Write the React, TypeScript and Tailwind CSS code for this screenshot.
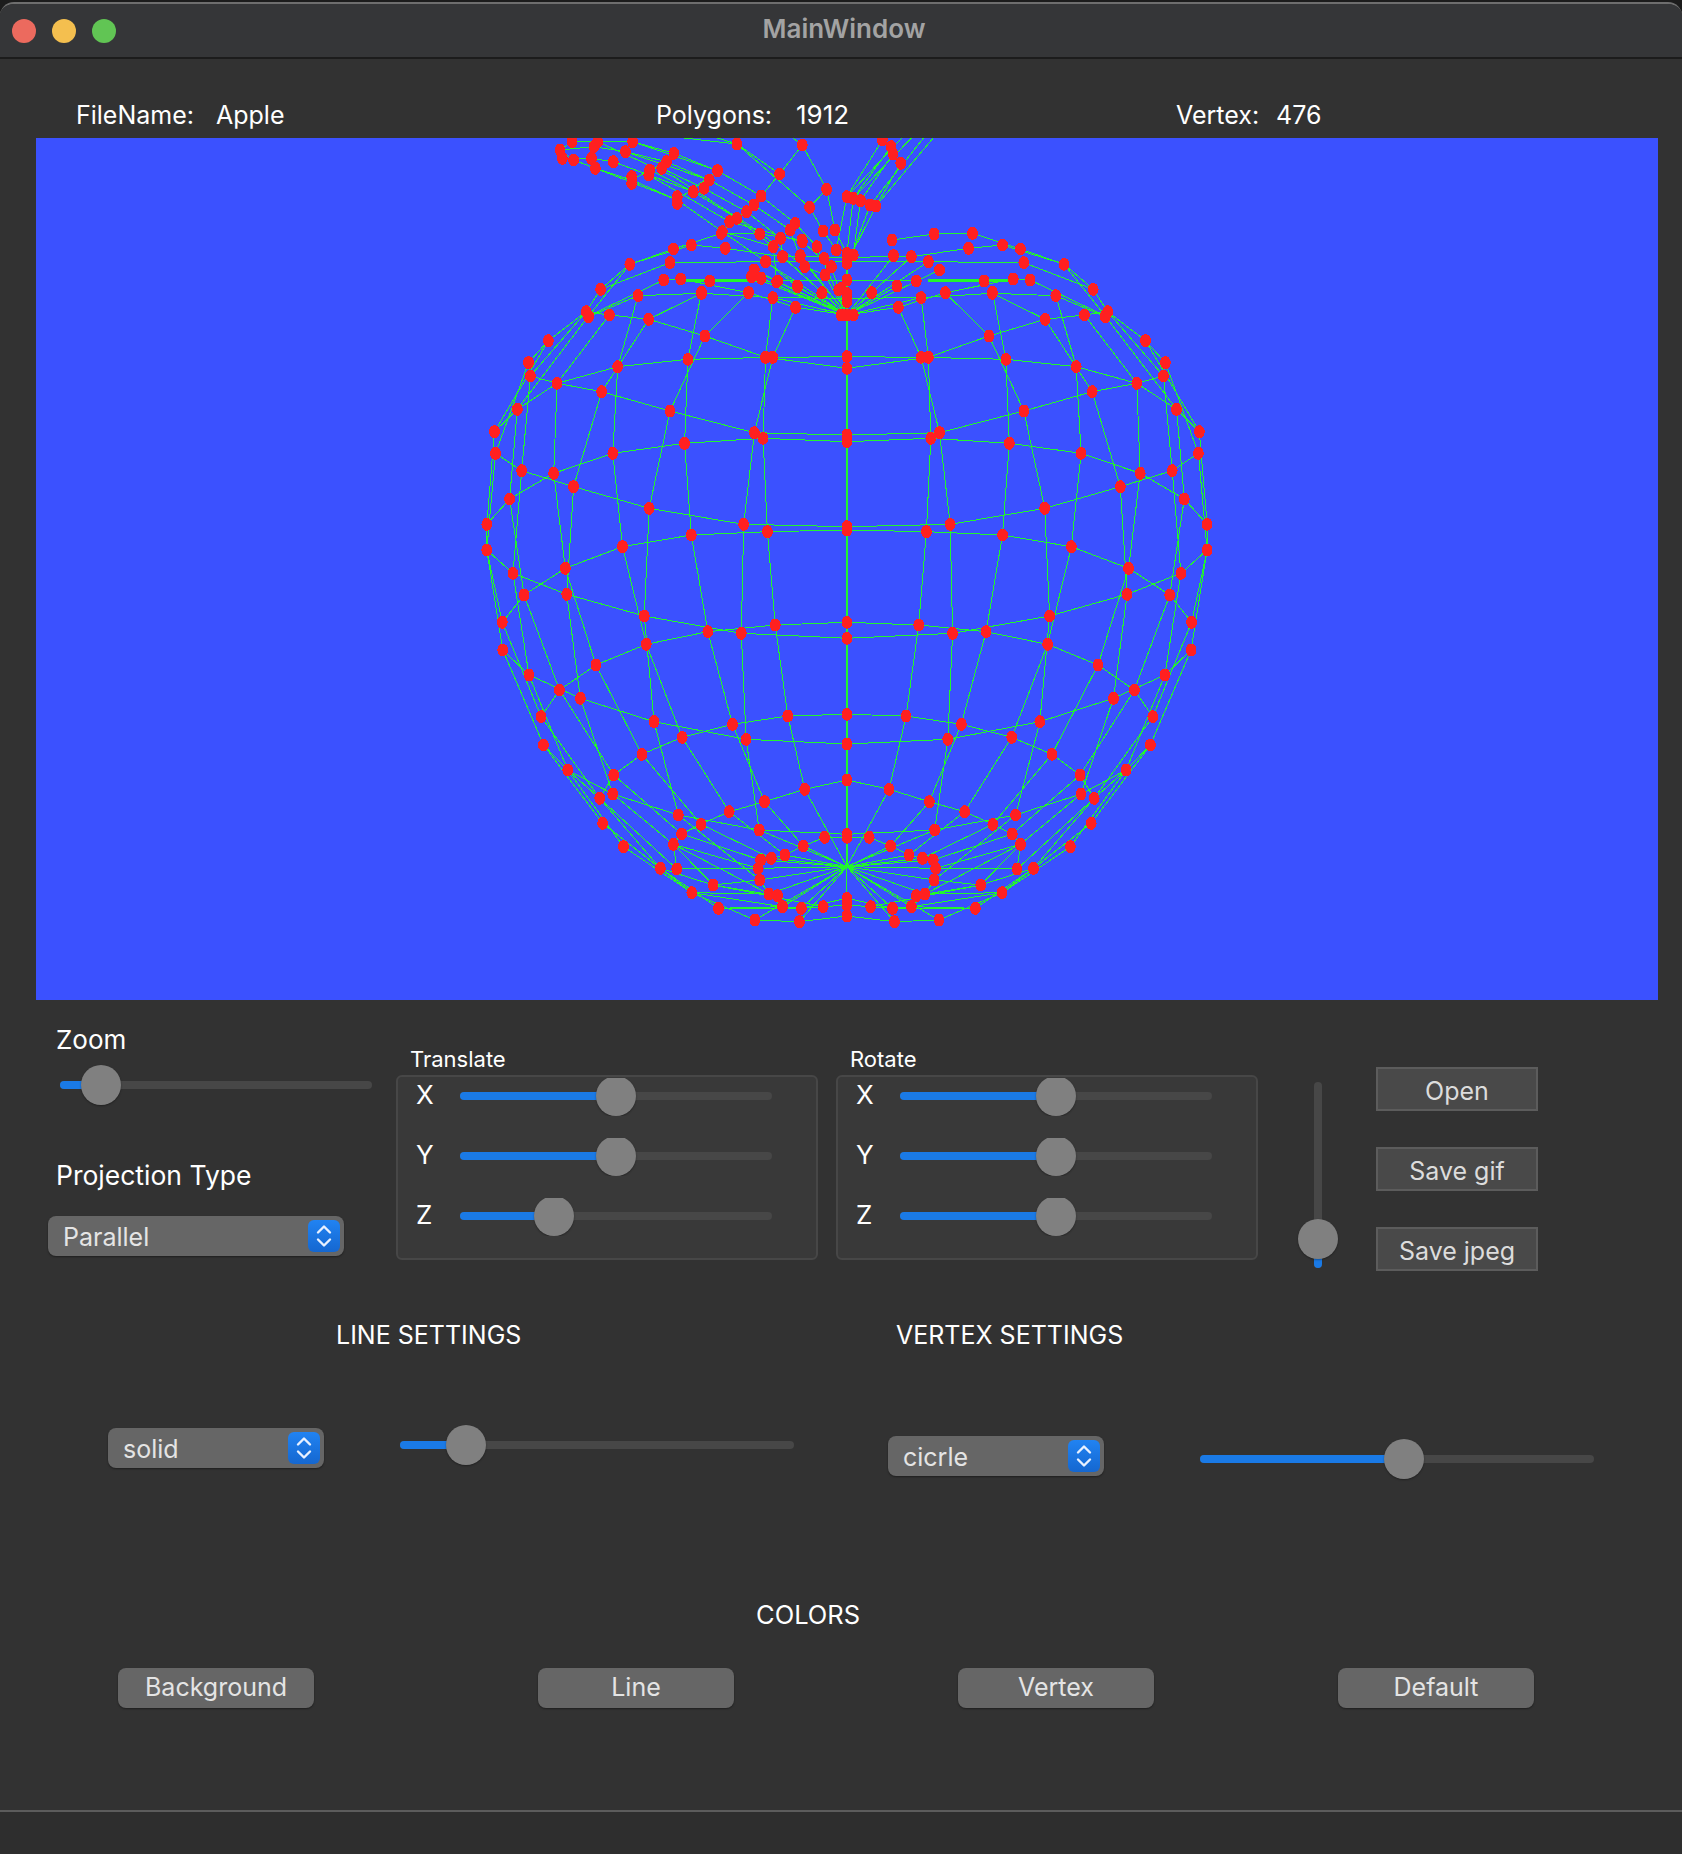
import React from 'react';

// mesh points were read off the picture: x is mirrored around the apple's axis (757)
const AXIS = 757;

const rings: number[][] = [
  [757,680, 910,682, 1085,688, 1230,710, 1355,760, 1437,838, 1484,905, 1500,1183],
  [757,715, 925,682, 1050,618, 1166,568, 1247,555, 1295,545],
  [757,915, 948,908, 1122,843, 1263,785, 1355,760, 1410,738, 1414,698],
  [757,935, 930,925, 1092,940, 1240,970, 1362,1030, 1453,1107, 1500,1183],
  [757,1190, 970,1183, 1165,1135, 1321,1070, 1428,1022, 1482,970],
  [757,1200, 921,1205, 1078,1215, 1220,1250, 1338,1315, 1423,1395, 1468,1477],
  [757,1525, 975,1510, 1175,1458, 1335,1393, 1446,1330, 1500,1260],
  [757,1477, 905,1485, 1044,1505, 1171,1543, 1275,1605, 1350,1680, 1388,1760],
  [757,1842, 965,1828, 1155,1775, 1307,1705, 1413,1635, 1467,1560],
  [757,1753, 879,1758, 993,1783, 1097,1822, 1180,1873, 1238,1935, 1267,2005],
  [757,2113, 938,2100, 1105,2055, 1240,1992, 1333,1920, 1383,1845],
  [757,1950, 844,1978, 927,2015, 1000,2045, 1058,2083, 1098,2112, 1115,2143, 1108,2217],
  [757,2122, 803,2122, 847,2148, 885,2175, 913,2185, 935,2190, 940,2215, 937,2250, 918,2292, 890,2330, 851,2335, 806,2330, 757,2325],
  [757,2305, 851,2335, 1022,2335, 1142,2215, 1261,2080, 1383,1845],
  [757,2358, 855,2375, 947,2370, 1077,2288, 1218,2150, 1333,1920],
  [900,2297, 1033,2265, 1115,2143, 1240,1992],
  [935,2190, 1098,2112],
  [940,2215, 1108,2217],
  [937,2250, 1033,2265, 1142,2215],
  [918,2292, 1077,2288],
  [890,2330, 1022,2335],
  // top of the apple
  [850,330, 937,312, 1016,310, 1115,357, 1205,403, 1265,478, 1295,545, 1373,632, 1414,698, 1482,970],
  [757,385, 853,377, 890,380, 1008,355, 1078,345, 1205,403, 1290,558],
  [757,395, 925,395, 1122,398, 1265,478],
  [757,450, 900,453, 1040,453, 1100,447, 1135,450, 1290,558],
  [757,505, 910,503, 1057,490, 1188,497, 1290,560],
  [757,555, 863,532, 960,488, 1100,447],
];

const meridians: number[][] = [
  [757,555, 863,532, 910,682, 948,908, 970,1183, 975,1510, 965,1828, 938,2100, 757,2210],
  [757,555, 910,503, 925,682, 930,925, 921,1205, 905,1485, 879,1758, 844,1978, 757,2210],
  [960,488, 1050,618, 1122,843, 1165,1135, 1175,1458, 1155,1775, 1105,2055, 937,2250, 757,2210],
  [1057,487, 1085,688, 1092,940, 1078,1215, 1044,1505, 993,1783, 927,2015, 847,2148, 757,2210],
  [1188,497, 1230,710, 1240,970, 1220,1250, 1171,1543, 1097,1822, 1000,2045, 885,2175, 757,2210],
  [1057,490, 1166,568, 1263,785, 1321,1070, 1335,1393, 1307,1705, 1240,1992, 1115,2143, 918,2292, 757,2210],
  [1247,555, 1355,760, 1362,1030, 1338,1315, 1275,1605, 1180,1873, 1058,2083, 913,2185, 757,2210],
  [1290,558, 1437,838, 1453,1107, 1423,1395, 1350,1680, 1238,1935, 1098,2112, 935,2190, 757,2210],
  [1295,545, 1410,738, 1428,1022, 1446,1330, 1413,1635, 1333,1920, 1267,2005, 1108,2217, 940,2215, 757,2210],
  [1373,632, 1484,905, 1500,1183, 1500,1260, 1468,1477, 1388,1760, 1267,2005, 1142,2215, 1033,2265, 806,2330],
  [1414,698, 1482,970, 1500,1260, 1467,1560, 1383,1845, 1261,2080, 1077,2288, 890,2330, 757,2210],
  [1115,2143, 940,2215], [855,2375, 757,2210], [947,2370, 757,2210], [851,2335, 757,2210],
  [757,555, 808,488], [757,555, 860,468], [757,555, 853,377], [757,555, 890,380],
  [757,555, 925,395], [757,555, 948,420], [757,2210, 757,2358],
];

// stem runs off the top of the canvas, it isn't mirrored
const stem: number[][] = [
  [190,35, 243,35, 315,35, 400,70, 385,95, 350,120, 313,150, 238,115, 193,90, 165,60, 190,35],
  [165,60, 235,50, 300,65, 385,95], [170,85, 230,85, 275,95, 348,135], [193,90, 238,115],
  [400,70, 490,122, 580,198, 650,280, 695,350, 757,555],
  [385,95, 473,150, 565,225, 640,300, 660,380, 757,555],
  [375,115, 462,175, 550,245, 620,325, 625,380, 757,555],
  [350,120, 440,185, 530,265, 605,350, 612,455, 757,555],
  [313,150, 407,210, 500,305, 590,395, 655,470, 757,555],
  [348,135, 515,275, 665,335, 725,410, 757,555],
  [243,35, 400,140, 560,290, 670,410, 712,435, 757,555],
  [315,35, 490,122], [238,115, 407,210], [275,95, 440,185], [300,65, 473,150],
  [490,122, 407,210, 500,305], [580,198, 500,305, 605,350], [650,280, 605,350],
  [420,24, 530,42, 618,132, 665,45, 715,178, 732,300, 757,370],
  [490,24, 530,42, 680,232, 708,303, 735,360], [645,24, 665,45], [618,132, 580,198], [680,232, 715,178],
  [830,30, 757,200, 735,360], [848,50, 770,205, 757,370], [852,72, 785,212, 770,375], [868,100, 817,228, 757,400],
  [870,24, 757,200], [890,24, 770,205], [915,24, 805,225, 760,400], [935,24, 817,228],
  [565,420, 757,555], [560,440, 757,555], [580,445, 757,555], [705,488, 757,555], [740,480, 757,555],
];

// the doubled rows at the top of the apple are drawn twice over, so they look thicker
const thick = [
  [925,450, 1040,450], [1050,450, 1092,450], [425,450, 470,450], [480,450, 590,450],
];

const stemDots = [
  [165,60],[190,35],[243,35],[235,50],[315,35],[300,65],[400,70],[170,85],[193,90],[230,85],[275,95],[238,115],[350,120],[375,115],[385,95],
  [490,122],[313,140],[313,160],[348,135],[473,150],[440,185],[462,175],[407,200],[407,220],[580,198],[565,225],[550,245],[530,265],[515,275],[500,305],
  [650,280],[640,300],[620,325],[605,350],[665,335],[695,350],[660,380],[625,380],[670,410],[710,385],[725,410],[712,435],[590,395],[565,420],
  [560,440],[580,445],[612,455],[655,470],[705,488],[740,480],[530,42],[665,45],[618,132],[715,178],[680,232],[708,303],[732,300],[757,370],
  [735,360],[770,375],[757,400],[830,30],[848,50],[852,72],[868,100],[757,200],[770,205],[785,212],[805,225],[817,228],[757,490],[757,515],
  [745,555],[770,555],[745,475],[757,2210],
];

const toX = (p: number) => 444 + p / 2.063;
const toY = (p: number) => p / 3 - 8;

function polyPath(list: number[][], mirror: boolean) {
  let d = '';
  for (const line of list) {
    for (const side of mirror ? [1, -1] : [1]) {
      for (let i = 0; i < line.length; i += 2) {
        const x = AXIS + (line[i] - AXIS) * side;
        d += `${i === 0 ? 'M' : 'L'}${toX(x).toFixed(1)} ${toY(line[i + 1]).toFixed(1)}`;
      }
    }
  }
  return d;
}

function meshDots() {
  const seen = new Set<string>();
  const dots: number[][] = [];
  const add = (x: number, y: number) => {
    const key = `${x},${y}`;
    if (!seen.has(key)) {
      seen.add(key);
      dots.push([x, y]);
    }
  };
  for (const line of [...rings, ...meridians]) {
    for (let i = 0; i < line.length; i += 2) {
      add(line[i], line[i + 1]);
      add(2 * AXIS - line[i], line[i + 1]);
    }
  }
  for (const [x, y] of stemDots) add(x, y);
  return dots.filter(([x, y]) => !(x === AXIS && y === 2210));
}

function Wireframe() {
  const dots = meshDots();
  return (
    <svg viewBox="0 0 1622 862" className="block w-full h-full" shapeRendering="crispEdges">
      <path d={polyPath(stem, false)} fill="none" stroke="#22f52e" strokeWidth="1" />
      <path d={polyPath(rings, true)} fill="none" stroke="#22f52e" strokeWidth="1" />
      <path d={polyPath(meridians, true)} fill="none" stroke="#22f52e" strokeWidth="1" />
      <path d={polyPath(thick, false)} fill="none" stroke="#22f52e" strokeWidth="3" />
      <path d={`M${toX(AXIS)} ${toY(370)}V${toY(2210)}`} fill="none" stroke="#22f52e" strokeWidth="2" />
      {dots.map(([x, y]) => (
        <ellipse key={`${x}-${y}`} cx={toX(x)} cy={toY(y)} rx="5.4" ry="6.5" fill="#ff2020" />
      ))}
    </svg>
  );
}

function Slider({ width, thumb, className = '' }: { width: number; thumb: number; className?: string }) {
  return (
    <div className={`relative h-[40px] shrink-0 ${className}`} style={{ width }}>
      <div className="absolute inset-x-0 top-[16px] h-2 rounded-full bg-[#474747]" />
      <div className="absolute left-0 top-[16px] h-2 rounded-l-full bg-[#1a7ae6]" style={{ width: thumb }} />
      <div
        className="absolute top-0 w-[40px] h-[40px] rounded-full bg-[#808080] shadow-[0_1px_2px_rgba(0,0,0,0.35)]"
        style={{ left: thumb - 20 }}
      />
    </div>
  );
}

function Group({ title, thumbs }: { title: string; thumbs: number[] }) {
  return (
    <div className="w-[422px] pt-[46px] shrink-0">
      <div className="h-[26px] pl-[14px] text-[22px] leading-[26px] text-white">{title}</div>
      <div className="mt-[3px] h-[185px] rounded-md border-2 border-[#474747] bg-[#393939] pt-px pl-[18px] flex flex-col gap-[22px]">
        {['X', 'Y', 'Z'].map((axis, i) => (
          <div key={axis} className="flex h-[38px] overflow-hidden">
            <span className="w-[44px] text-[26px] leading-[34px] text-white">{axis}</span>
            <Slider width={312} thumb={thumbs[i]} className="-mt-[2px]" />
          </div>
        ))}
      </div>
    </div>
  );
}

function Combo({ label, width, className = '' }: { label: string; width: number; className?: string }) {
  return (
    <div
      className={`flex items-center justify-between h-[40px] rounded-lg bg-[#666666] pl-[15px] pr-1 shrink-0 shadow-[0_1px_2px_rgba(0,0,0,0.4)] ${className}`}
      style={{ width }}
    >
      <span className="pt-[4px] text-[25px] text-[#e4e4e4]">{label}</span>
      <span className="flex items-center justify-center w-[32px] h-[32px] rounded-md bg-gradient-to-b from-[#2183f2] to-[#1567d0]">
        <svg viewBox="0 0 18 26" className="w-[18px] h-[26px]" fill="none" stroke="#e8f1ff" strokeWidth="2.4" strokeLinecap="round" strokeLinejoin="round">
          <path d="M3 9.5 9 3.5l6 6M3 16.5l6 6 6-6" />
        </svg>
      </span>
    </div>
  );
}

function ColorButton({ label, width, className = '' }: { label: string; width: number; className?: string }) {
  return (
    <button
      className={`h-[40px] rounded-lg bg-[#666666] text-[25px] text-[#e4e4e4] shrink-0 shadow-[0_1px_2px_rgba(0,0,0,0.4)] ${className}`}
      style={{ width }}
    >
      {label}
    </button>
  );
}

function SquareButton({ label }: { label: string }) {
  return (
    <button className="w-[162px] h-[44px] pt-[4px] border-2 border-[#5c5c5c] bg-[#494949] text-[25px] text-[#dcdcdc]">
      {label}
    </button>
  );
}

export default function App() {
  return (
    <div className="w-[1682px] h-[1854px] bg-[#1c1c1c] font-['Inter',sans-serif] overflow-hidden">
      <div className="flex flex-col h-full rounded-t-[14px] bg-[#323232] overflow-hidden border-t-2 border-[#6e6e6e] mt-[2px]">
        <div className="grid grid-cols-[1fr_auto_1fr] items-center h-[55px] bg-[#353638] border-b-2 border-[#1c1c1c] pl-3 pr-[6px]">
          <div className="flex gap-4">
            <span className="w-6 h-6 rounded-full bg-[#ec6a5e]" />
            <span className="w-6 h-6 rounded-full bg-[#f4bf4f]" />
            <span className="w-6 h-6 rounded-full bg-[#61c554]" />
          </div>
          <div className="pb-[5px] text-[26px] font-semibold text-[#a3a3a3]">MainWindow</div>
        </div>

        <div className="flex items-end h-[79px] pl-[76px] text-[25px] leading-[46px] text-white">
          <div className="flex w-[580px]"><span className="w-[140px]">FileName:</span><span>Apple</span></div>
          <div className="flex w-[520px]"><span className="w-[140px]">Polygons:</span><span className="text-[26px]">1912</span></div>
          <div className="flex"><span className="w-[100px]">Vertex:</span><span>476</span></div>
        </div>

        <div className="ml-[36px] w-[1622px] h-[862px] bg-[#3b51ff] overflow-hidden shrink-0">
          <Wireframe />
        </div>

        <div className="flex h-[300px] pl-[48px] shrink-0">
          <div className="w-[348px] pt-[24px] shrink-0">
            <div className="ml-2 h-8 text-[26px] leading-8 text-white">Zoom</div>
            <Slider width={312} thumb={41} className="ml-3 mt-[9px]" />
            <div className="ml-2 mt-[54px] h-8 text-[26.5px] leading-8 text-white">Projection Type</div>
            <Combo label="Parallel" width={296} className="mt-[25px]" />
          </div>
          <Group title="Translate" thumbs={[156, 156, 94]} />
          <div className="ml-[18px]">
            <Group title="Rotate" thumbs={[156, 156, 156]} />
          </div>
          <div className="relative ml-[40px] mt-[82px] w-[40px] h-[186px] shrink-0">
            <div className="absolute left-[16px] inset-y-0 w-2 rounded-full bg-[#474747]" />
            <div className="absolute left-[16px] bottom-0 h-[28px] w-2 rounded-b-full bg-[#1a7ae6]" />
            <div className="absolute left-0 top-[137px] w-[40px] h-[40px] rounded-full bg-[#808080] shadow-[0_1px_2px_rgba(0,0,0,0.35)]" />
          </div>
          <div className="ml-[38px] mt-[67px] flex flex-col gap-9">
            <SquareButton label="Open" />
            <SquareButton label="Save gif" />
            <SquareButton label="Save jpeg" />
          </div>
        </div>

        <div className="flex mt-[19px] h-8 pl-[336px] text-[25px] leading-8 text-white">
          <div className="w-[560px]">LINE SETTINGS</div>
          <div>VERTEX SETTINGS</div>
        </div>

        <div className="flex items-start mt-[74px] pl-[108px]">
          <Combo label="solid" width={216} className="mt-[3px]" />
          <Slider width={394} thumb={66} className="ml-[76px]" />
          <Combo label="cicrle" width={216} className="ml-[94px] mt-[11px]" />
          <Slider width={394} thumb={204} className="ml-[96px] mt-[14px]" />
        </div>

        <div className="mt-[120px] h-8 pl-[756px] text-[25.5px] leading-8 text-white">COLORS</div>

        <div className="flex mt-[37px] pl-[118px]">
          <ColorButton label="Background" width={196} />
          <ColorButton label="Line" width={196} className="ml-[224px]" />
          <ColorButton label="Vertex" width={196} className="ml-[224px]" />
          <ColorButton label="Default" width={196} className="ml-[184px]" />
        </div>

        <div className="mt-auto h-[46px] border-t-2 border-[#5c5c5c] bg-[#2e2e2e]" />
      </div>
    </div>
  );
}
